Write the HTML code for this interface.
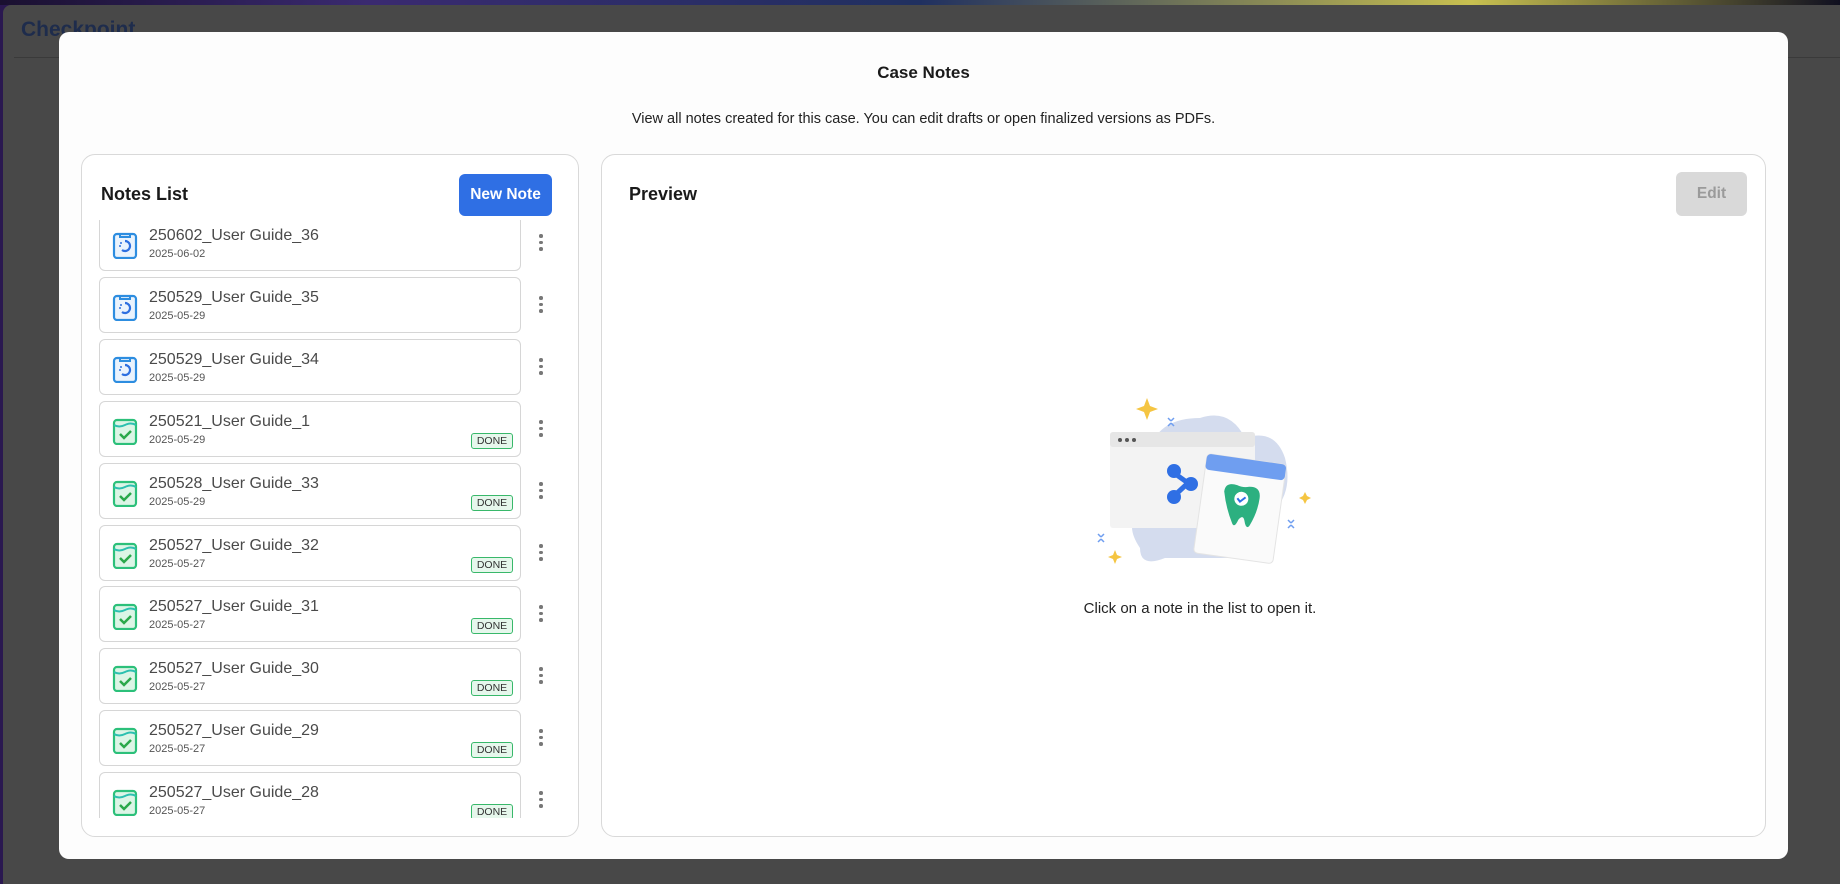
<!DOCTYPE html>
<html><head><meta charset="utf-8">
<style>
*{box-sizing:border-box;margin:0;padding:0}
body{width:1840px;height:884px;overflow:hidden;background:#2a1850;font-family:"Liberation Sans","DejaVu Sans",sans-serif;position:relative}
.topstrip{position:absolute;left:0;top:0;width:1840px;height:5px;background:linear-gradient(90deg,#1a1030,#3a2a70 20%,#203060 50%,#c8c050 80%,#101020)}
.hdr{position:absolute;left:3px;top:5px;width:1837px;height:879px;background:#484848;border-top-left-radius:8px}
.brand{position:absolute;left:21px;top:18px;font-size:21px;font-weight:bold;color:#1e2c4c}
.hline{position:absolute;left:14px;top:57px;width:1826px;height:1px;background:#3a3a3a}
.modal{position:absolute;left:59px;top:32px;width:1729px;height:827px;background:#fdfdfd;border-radius:10px}
.title{position:absolute;left:0;width:100%;top:31px;text-align:center;font-size:17px;font-weight:bold;color:#1a1a1a}
.sub{position:absolute;left:0;width:100%;top:79px;text-align:center;font-size:14.5px;color:#222}
.panel{position:absolute;top:154px;height:683px;border:1px solid #d9d9d9;border-radius:14px;background:#fff}
.h{position:absolute;font-size:18px;font-weight:bold;color:#1a1a1a}
.btn{position:absolute;border-radius:6px;font-size:15.5px;font-weight:bold;text-align:center}
.list{position:absolute;left:99px;top:220px;width:470px;height:598px;overflow:hidden}
.item{position:absolute;left:0;width:422px;height:56px;border:1px solid #d6d6d6;border-radius:6px;background:#fff}
.item .t{position:absolute;left:49px;top:11px;font-size:16px;color:#4a4a4a}
.item .d{position:absolute;left:49px;top:32px;font-size:11px;color:#555}
.item svg{position:absolute;left:12px;top:15px}
.badge{position:absolute;left:371px;top:31px;width:42px;height:16px;border:1px solid #38b86a;background:#e6f7ec;border-radius:3px;font-size:10.5px;color:#333;text-align:center;line-height:14px}
.keb{position:absolute;left:440px;width:4px}
.keb i{display:block;width:3.5px;height:3.5px;border-radius:50%;background:#777;margin-bottom:3px}
</style></head><body>
<div class="topstrip"></div>
<div class="hdr"></div>
<div class="brand">Checkpoint</div>
<div class="hline"></div>
<div class="modal">
 <div class="title">Case Notes</div>
 <div class="sub">View all notes created for this case. You can edit drafts or open finalized versions as PDFs.</div>
</div>
<div class="panel" style="left:81px;width:498px"></div>
<div class="panel" style="left:601px;width:1165px"></div>
<div class="h" style="left:101px;top:184px">Notes List</div>
<div class="btn" style="left:459px;top:174px;width:93px;height:42px;background:#2f6fe4;color:#fff;line-height:42px">New Note</div>
<div class="h" style="left:629px;top:184px">Preview</div>
<div class="btn" style="left:1676px;top:172px;width:71px;height:44px;background:#d9d9d9;color:#9a9a9a;line-height:44px">Edit</div>

<div class="list">
<div class="item" style="top:-5px"><svg width="26" height="28" viewBox="0 0 26 28"><rect x="2" y="3" width="22" height="24" rx="3" fill="#eaf3fd" stroke="#2d8de0" stroke-width="2.2"/><path d="M8 3v3h10V3" fill="none" stroke="#2d8de0" stroke-width="2"/><path d="M13 10a5 5 0 1 1 -3 9" fill="none" stroke="#2d6fe0" stroke-width="2.2"/><circle cx="9" cy="12" r="1" fill="#2d6fe0"/><circle cx="8" cy="15" r="1" fill="#2d6fe0"/></svg><div class="t">250602_User Guide_36</div><div class="d">2025-06-02</div></div>
<div class="keb" style="top:14px"><i></i><i></i><i></i></div>

<div class="item" style="top:57px"><svg width="26" height="28" viewBox="0 0 26 28"><rect x="2" y="3" width="22" height="24" rx="3" fill="#eaf3fd" stroke="#2d8de0" stroke-width="2.2"/><path d="M8 3v3h10V3" fill="none" stroke="#2d8de0" stroke-width="2"/><path d="M13 10a5 5 0 1 1 -3 9" fill="none" stroke="#2d6fe0" stroke-width="2.2"/><circle cx="9" cy="12" r="1" fill="#2d6fe0"/><circle cx="8" cy="15" r="1" fill="#2d6fe0"/></svg><div class="t">250529_User Guide_35</div><div class="d">2025-05-29</div></div>
<div class="keb" style="top:76px"><i></i><i></i><i></i></div>

<div class="item" style="top:119px"><svg width="26" height="28" viewBox="0 0 26 28"><rect x="2" y="3" width="22" height="24" rx="3" fill="#eaf3fd" stroke="#2d8de0" stroke-width="2.2"/><path d="M8 3v3h10V3" fill="none" stroke="#2d8de0" stroke-width="2"/><path d="M13 10a5 5 0 1 1 -3 9" fill="none" stroke="#2d6fe0" stroke-width="2.2"/><circle cx="9" cy="12" r="1" fill="#2d6fe0"/><circle cx="8" cy="15" r="1" fill="#2d6fe0"/></svg><div class="t">250529_User Guide_34</div><div class="d">2025-05-29</div></div>
<div class="keb" style="top:138px"><i></i><i></i><i></i></div>

<div class="item" style="top:181px"><svg width="26" height="28" viewBox="0 0 26 28"><rect x="2" y="3" width="22" height="24" rx="3" fill="#dcf5e6" stroke="#2cc07a" stroke-width="2.2"/><path d="M2 8q5 3 11 0t11 0" fill="none" stroke="#2cc0b0" stroke-width="2"/><path d="M8 17l4 4 7-7" fill="none" stroke="#2aa84a" stroke-width="2.5"/></svg><div class="t">250521_User Guide_1</div><div class="d">2025-05-29</div><div class="badge">DONE</div></div>
<div class="keb" style="top:200px"><i></i><i></i><i></i></div>

<div class="item" style="top:243px"><svg width="26" height="28" viewBox="0 0 26 28"><rect x="2" y="3" width="22" height="24" rx="3" fill="#dcf5e6" stroke="#2cc07a" stroke-width="2.2"/><path d="M2 8q5 3 11 0t11 0" fill="none" stroke="#2cc0b0" stroke-width="2"/><path d="M8 17l4 4 7-7" fill="none" stroke="#2aa84a" stroke-width="2.5"/></svg><div class="t">250528_User Guide_33</div><div class="d">2025-05-29</div><div class="badge">DONE</div></div>
<div class="keb" style="top:262px"><i></i><i></i><i></i></div>

<div class="item" style="top:305px"><svg width="26" height="28" viewBox="0 0 26 28"><rect x="2" y="3" width="22" height="24" rx="3" fill="#dcf5e6" stroke="#2cc07a" stroke-width="2.2"/><path d="M2 8q5 3 11 0t11 0" fill="none" stroke="#2cc0b0" stroke-width="2"/><path d="M8 17l4 4 7-7" fill="none" stroke="#2aa84a" stroke-width="2.5"/></svg><div class="t">250527_User Guide_32</div><div class="d">2025-05-27</div><div class="badge">DONE</div></div>
<div class="keb" style="top:324px"><i></i><i></i><i></i></div>

<div class="item" style="top:366px"><svg width="26" height="28" viewBox="0 0 26 28"><rect x="2" y="3" width="22" height="24" rx="3" fill="#dcf5e6" stroke="#2cc07a" stroke-width="2.2"/><path d="M2 8q5 3 11 0t11 0" fill="none" stroke="#2cc0b0" stroke-width="2"/><path d="M8 17l4 4 7-7" fill="none" stroke="#2aa84a" stroke-width="2.5"/></svg><div class="t">250527_User Guide_31</div><div class="d">2025-05-27</div><div class="badge">DONE</div></div>
<div class="keb" style="top:385px"><i></i><i></i><i></i></div>

<div class="item" style="top:428px"><svg width="26" height="28" viewBox="0 0 26 28"><rect x="2" y="3" width="22" height="24" rx="3" fill="#dcf5e6" stroke="#2cc07a" stroke-width="2.2"/><path d="M2 8q5 3 11 0t11 0" fill="none" stroke="#2cc0b0" stroke-width="2"/><path d="M8 17l4 4 7-7" fill="none" stroke="#2aa84a" stroke-width="2.5"/></svg><div class="t">250527_User Guide_30</div><div class="d">2025-05-27</div><div class="badge">DONE</div></div>
<div class="keb" style="top:447px"><i></i><i></i><i></i></div>

<div class="item" style="top:490px"><svg width="26" height="28" viewBox="0 0 26 28"><rect x="2" y="3" width="22" height="24" rx="3" fill="#dcf5e6" stroke="#2cc07a" stroke-width="2.2"/><path d="M2 8q5 3 11 0t11 0" fill="none" stroke="#2cc0b0" stroke-width="2"/><path d="M8 17l4 4 7-7" fill="none" stroke="#2aa84a" stroke-width="2.5"/></svg><div class="t">250527_User Guide_29</div><div class="d">2025-05-27</div><div class="badge">DONE</div></div>
<div class="keb" style="top:509px"><i></i><i></i><i></i></div>

<div class="item" style="top:552px"><svg width="26" height="28" viewBox="0 0 26 28"><rect x="2" y="3" width="22" height="24" rx="3" fill="#dcf5e6" stroke="#2cc07a" stroke-width="2.2"/><path d="M2 8q5 3 11 0t11 0" fill="none" stroke="#2cc0b0" stroke-width="2"/><path d="M8 17l4 4 7-7" fill="none" stroke="#2aa84a" stroke-width="2.5"/></svg><div class="t">250527_User Guide_28</div><div class="d">2025-05-27</div><div class="badge">DONE</div></div>
<div class="keb" style="top:571px"><i></i><i></i><i></i></div>
</div>

<svg style="position:absolute;left:1080px;top:398px" width="240" height="170" viewBox="0 0 240 170">
 <path d="M60 150 q-20 -30 10 -40 l0 -60 q10 -30 50 -30 q30 -10 45 20 q30 -10 40 20 q10 40 -20 60 q10 40 -40 40 l-60 0 q-25 10 -25 -10z" fill="#d4dcee"/>
 <rect x="30" y="34" width="145" height="96" rx="3" fill="#f3f3f3"/>
 <rect x="30" y="34" width="145" height="15" rx="3" fill="#e6e6e6"/>
 <circle cx="40" cy="42" r="2" fill="#555"/><circle cx="47" cy="42" r="2" fill="#555"/><circle cx="54" cy="42" r="2" fill="#555"/>
 <g stroke="#2f6fe4" stroke-width="5"><line x1="94" y1="75" x2="108" y2="85"/><line x1="94" y1="98" x2="108" y2="85"/></g>
 <circle cx="94" cy="73" r="7" fill="#2f6fe4"/><circle cx="94" cy="99" r="7" fill="#2f6fe4"/><circle cx="111" cy="86" r="7" fill="#2f6fe4"/>
 <g transform="rotate(8 155 110)">
  <rect x="120" y="60" width="80" height="100" rx="4" fill="#fafafa" stroke="#e4e4e4"/>
  <rect x="120" y="60" width="80" height="16" rx="4" fill="#6f9ef0"/>
  <path d="M142 95 q0 -10 12 -8 q6 2 12 0 q12 -2 12 10 q0 14 -6 28 q-3 6 -6 -4 q-2 -6 -6 0 q-3 10 -6 4 q-8 -14 -12 -30z" fill="#2cb080"/>
  <circle cx="160" cy="100" r="7" fill="#fff"/><path d="M156 100l3 3 5 -5" fill="none" stroke="#2f6fe4" stroke-width="2"/>
 </g>
 <path d="M67 0 l3 8 8 3 -8 3 -3 8 -3 -8 -8 -3 8 -3z" fill="#f5c542"/>
 <path d="M35 152 l2 5 5 2 -5 2 -2 5 -2 -5 -5 -2 5 -2z" fill="#f5c542"/>
 <path d="M225 94 l2 4 4 2 -4 2 -2 4 -2 -4 -4 -2 4 -2z" fill="#f5c542"/>
 <g stroke="#6f9ef0" stroke-width="1.5"><path d="M88 20l3 3M94 20l-3 3M88 28l3-3M94 28l-3-3"/><path d="M18 136l3 3M24 136l-3 3M18 144l3-3M24 144l-3-3"/><path d="M208 122l3 3M214 122l-3 3M208 130l3-3M214 130l-3-3"/></g>
</svg>
<div style="position:absolute;left:1000px;width:400px;top:600px;text-align:center;font-size:15px;color:#222">Click on a note in the list to open it.</div>
</body></html>
